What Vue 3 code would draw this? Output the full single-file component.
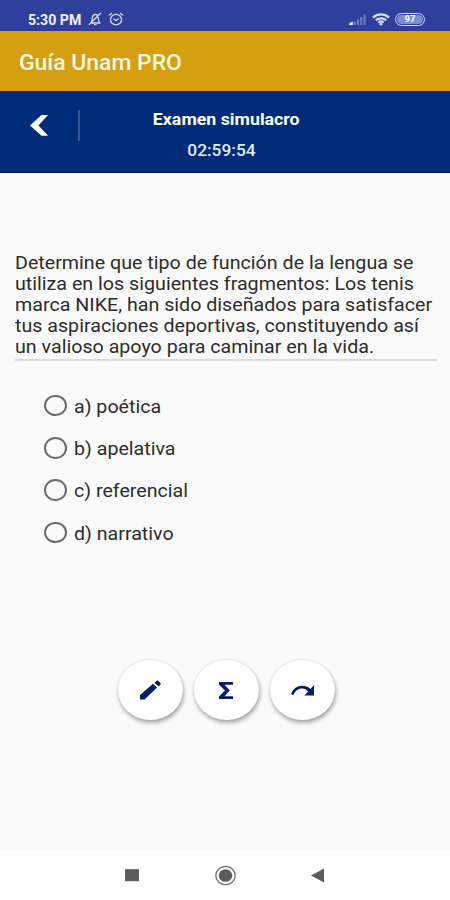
<template>
  <div class="screen">
    <header class="status">
      <span class="status__time">5:30 PM</span>
      <svg class="status__bell" viewBox="0 0 14 14" aria-hidden="true">
        <path d="M2 11h10.4M3.300 10.500c.9-1.200.7-3.200 1.100-5.100C4.800 3.300 5.900 2.300 7.300 2.300s2.700 1 2.900 3.100c.2 2 .2 3.900 1.300 5.100M6 12.700h2.600M1 12.800L12.800 1" />
      </svg>
      <svg class="status__alarm" viewBox="0 0 16 14" aria-hidden="true">
        <ellipse cx="8" cy="7.600" rx="5.600" ry="5.200" />
        <path d="M1 3.400L3.800 1M15 3.400L12.200 1M5.500 6.700l2.400 1.900 3-2.200" />
      </svg>
      <span class="status__space"></span>
      <svg class="status__signal" viewBox="0 0 18 13" aria-hidden="true">
        <path class="dim" d="M4.800 12V8.500h2V12zM8 12V6.500h2V12zM11.200 12V4h2v8zM14.500 12V1.500h2V12z" />
        <path d="M0 12l.8-2.200L3.800 8.500V12z" />
      </svg>
      <svg class="status__wifi" viewBox="0 0 18 13" aria-hidden="true">
        <path d="M1 4.600C5.500.4 12.500.4 17 4.600M3.800 7.300c3-2.700 7.400-2.700 10.400 0M6.400 9.600c1.500-1.300 3.700-1.300 5.200 0" />
        <circle cx="9" cy="11.200" r="1.400" />
      </svg>
      <span class="status__battery"><b>97</b></span>
    </header>

    <div class="appbar"><span class="appbar__title">Guía Unam PRO</span></div>

    <div class="exam">
      <button class="exam__back" type="button" aria-label="Atrás">
        <svg viewBox="0 0 18 21"><path d="M11.500 0H18L8.500 10.400 18 20.800h-6.500L0 10.400z" /></svg>
      </button>
      <div class="exam__info">
        <span class="exam__name">Examen simulacro</span>
        <span class="exam__clock">02:59:54</span>
      </div>
    </div>

    <main class="content">
      <div class="question">
        <span v-for="line in question" :key="line" class="question__line">{{ line }}</span>
      </div>

      <div class="options">
        <label v-for="option in options" :key="option.id" class="option">
          <input v-model="answer" class="option__radio" type="radio" name="answer" :value="option.id" />
          <span class="option__text">{{ option.id }}) {{ option.text }}</span>
        </label>
      </div>

      <div class="tools">
        <button class="tool" type="button" aria-label="Notas">
          <svg class="tool__pencil" viewBox="0 0 21 20">
            <path d="M0 15L13 3.800l4 3.700L4.600 19.500H0zM14.500 2.700L16.700.8c.4-.4 1-.4 1.400 0l2.400 2.300c.4.4.4.9 0 1.300l-1.900 2z" />
          </svg>
        </button>
        <button class="tool" type="button" aria-label="Fórmulas">
          <svg class="tool__sigma" viewBox="0 0 14 17">
            <path d="M0 0h14v2.800H5.600L10.800 8.500 5.600 14.200H14V17H0v-2.600l6-5.900L0 2.600z" />
          </svg>
        </button>
        <button class="tool" type="button" aria-label="Siguiente">
          <svg class="tool__next" viewBox="0 0 23 11">
            <path d="M0 9.200C2 3.500 6.500.8 11.200.8c3.300 0 6 1.100 8.300 3.100L23 0V10.500H13.200l3.900-3.800C15.400 4.800 13.500 3.600 11.200 3.600c-3.900 0-7.100 2.400-8.700 6.400z" />
          </svg>
        </button>
      </div>
    </main>

    <nav class="nav">
      <svg viewBox="0 0 22 22"><path class="nav__square" d="M4 5.200h14v12H4z" /></svg>
      <svg viewBox="0 0 22 22">
        <ellipse class="nav__ring" cx="11.500" cy="11.500" rx="9.700" ry="9.200" />
        <ellipse cx="11.500" cy="11.500" rx="6.700" ry="6.300" />
      </svg>
      <svg viewBox="0 0 22 22"><path d="M5 11.500l13-7v14z" /></svg>
    </nav>
  </div>
</template>

<script setup>
import { ref } from 'vue'

const answer = ref('')

const question = [
  'Determine que tipo de función de la lengua se',
  'utiliza en los siguientes fragmentos: Los tenis',
  'marca NIKE, han sido diseñados para satisfacer',
  'tus aspiraciones deportivas, constituyendo así',
  'un valioso apoyo para caminar en la vida.',
]

const options = [
  { id: 'a', text: 'poética' },
  { id: 'b', text: 'apelativa' },
  { id: 'c', text: 'referencial' },
  { id: 'd', text: 'narrativo' },
]
</script>

<style>
body {
  margin: 0;
}
</style>

<style scoped>
.screen {
  --navy: #002b78;
  --gold: #d59f10;
  width: 450px;
  height: 900px;
  display: flex;
  flex-direction: column;
  overflow: hidden;
  background: #fafafa;
  font-family: Roboto, sans-serif;
  color: #2c2c2c;
}

.status {
  box-sizing: border-box;
  height: 31px;
  flex: none;
  display: flex;
  align-items: center;
  padding: 8px 25px 0 28px;
  background: #2f3f9c;
  border-bottom: 1px solid #2c379a;
  color: #eef0ff;
}

.status svg {
  flex: none;
  fill: none;
  stroke: #d5dcf8;
  stroke-width: 1.300;
}

.status__time {
  width: 60px;
  padding-top: 1px;
  font-size: 14px;
  font-weight: 700;
  line-height: 16px;
  white-space: nowrap;
  transform: scaleX(1.01);
  transform-origin: left;
}

.status__bell {
  width: 14px;
  height: 14px;
}

.status__alarm {
  width: 16px;
  height: 14px;
  margin-left: 6px;
}

.status__space {
  flex: 1;
}

.status .status__signal {
  width: 18px;
  height: 13px;
  margin-right: 5px;
  fill: #f4f6ff;
  stroke: none;
}

.status__signal .dim {
  fill: #6f7dc4;
}

.status .status__wifi {
  width: 18px;
  height: 13px;
  margin-right: 5px;
  stroke-width: 2.200;
}

.status__wifi circle {
  fill: #d5dcf8;
  stroke: none;
}

.status__battery {
  box-sizing: border-box;
  width: 30px;
  height: 13px;
  display: flex;
  padding: 1px;
  border: 1.500px solid #d5dcf8;
  border-radius: 7px;
}

.status__battery b {
  flex: 1;
  border-radius: 5px;
  background: #7f8fcd;
  color: #fff;
  font-size: 9px;
  line-height: 9px;
  text-align: center;
}

.appbar {
  box-sizing: border-box;
  height: 60px;
  flex: none;
  display: flex;
  align-items: center;
  padding: 2px 0 0 19px;
  background: var(--gold);
}

.appbar__title {
  font-size: 21.500px;
  font-weight: 500;
  color: #fff8e6;
  white-space: nowrap;
  transform: scaleX(1.065);
  transform-origin: left;
}

.exam {
  box-sizing: border-box;
  height: 82px;
  flex: none;
  display: flex;
  background: var(--navy);
  border-bottom: 1px solid #00165f;
  color: #fff;
}

.exam__back {
  box-sizing: border-box;
  width: 50px;
  height: 31px;
  margin-top: 19px;
  margin-left: 30px;
  padding: 0;
  border: 0;
  border-right: 2px solid #375698;
  background: none;
  text-align: left;
}

.exam__back svg {
  display: block;
  width: 18px;
  height: 21px;
  fill: #fff;
}

.exam__info {
  width: 292px;
  display: flex;
  flex-direction: column;
  align-items: center;
  padding-top: 18px;
}

.exam__name {
  font-size: 17px;
  font-weight: 700;
  line-height: 20px;
  transform: scaleX(1.045);
}

.exam__clock {
  margin-top: 11px;
  margin-right: 10px;
  font-size: 17px;
  font-weight: 500;
  line-height: 20px;
  color: #e3e9f8;
  transform: scaleX(1.02);
}

.content {
  flex: 1;
  padding: 79px 13px 0 14.500px;
}

.question {
  display: flex;
  flex-direction: column;
  align-items: flex-start;
  padding-bottom: 2px;
  border-bottom: 2px solid #dadada;
}

.question__line {
  font-size: 18px;
  line-height: 21px;
  white-space: nowrap;
  transform: scaleX(1.092);
  transform-origin: left;
}

.options {
  display: flex;
  flex-direction: column;
  margin: 23.500px 0 0 29.500px;
}

.option {
  height: 42.300px;
  display: flex;
  align-items: center;
}

.option__radio {
  appearance: none;
  box-sizing: border-box;
  width: 23px;
  height: 21.500px;
  margin: 0 7px 0 0;
  border: 2px solid #6a6a6a;
  border-radius: 50%;
}

.option__radio:checked {
  background: radial-gradient(var(--navy) 45%, transparent 50%);
}

.option__text {
  padding-top: 1px;
  font-size: 18px;
  line-height: 21px;
  transform: scaleX(1.09);
  transform-origin: left;
}

.tools {
  display: flex;
  gap: 11px;
  margin: 106.500px 0 0 103px;
}

.tool {
  width: 65px;
  height: 60px;
  display: flex;
  align-items: center;
  justify-content: center;
  padding: 0;
  border: 0;
  border-radius: 50%;
  background: #fff;
  box-shadow: 1px 3px 4px rgba(0, 0, 0, 0.32), 0 0 3px rgba(0, 0, 0, 0.1);
}

.tool svg {
  fill: #071a6b;
}

.tool__pencil {
  width: 21px;
  height: 20px;
}

.tool__sigma {
  width: 14px;
  height: 17px;
}

.tool__next {
  width: 23px;
  height: 11px;
}

.nav {
  box-sizing: border-box;
  height: 49px;
  flex: none;
  display: flex;
  justify-content: space-between;
  padding: 13px 122px 0 121px;
  background: #fff;
}

.nav svg {
  width: 22px;
  height: 22px;
  fill: #5c5c5c;
}

.nav .nav__ring {
  fill: none;
  stroke: #6c6c6c;
  stroke-width: 1.300;
}
</style>
